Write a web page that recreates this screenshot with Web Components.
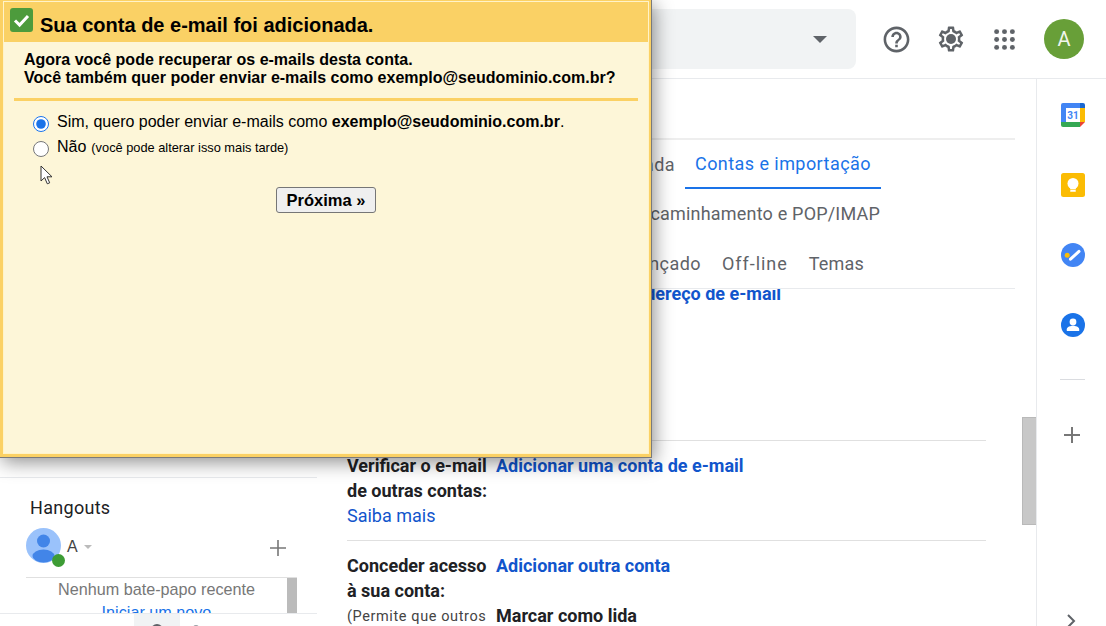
<!DOCTYPE html>
<html lang="pt-BR">
<head>
<meta charset="utf-8">
<title>Gmail</title>
<style>
  html, body { margin: 0; height: 100%; overflow: hidden; background: #fff; }
</style>
</head>
<body>
<gm-app></gm-app>
<script>
const GEAR = 'M19.43 12.98c.04-.32.07-.64.07-.98 0-.34-.03-.66-.07-.98l2.11-1.65c.19-.15.24-.42.12-.64l-2-3.46c-.09-.16-.26-.25-.44-.25-.06 0-.12.01-.17.03l-2.49 1c-.52-.4-1.08-.73-1.69-.98l-.38-2.65C14.46 2.18 14.25 2 14 2h-4c-.25 0-.46.18-.49.42l-.38 2.65c-.61.25-1.17.59-1.69.98l-2.49-1c-.06-.02-.12-.03-.18-.03-.17 0-.34.09-.43.25l-2 3.46c-.13.22-.07.49.12.64l2.11 1.65c-.04.32-.07.65-.07.98 0 .33.03.66.07.98l-2.11 1.65c-.19.15-.24.42-.12.64l2 3.46c.09.16.26.25.44.25.06 0 .12-.01.17-.03l2.49-1c.52.4 1.08.73 1.69.98l.38 2.65c.03.24.24.42.49.42h4c.25 0 .46-.18.49-.42l.38-2.65c.61-.25 1.17-.59 1.69-.98l2.49 1c.06.02.12.03.18.03.17 0 .34-.09.43-.25l2-3.46c.12-.22.07-.49-.12-.64l-2.11-1.65zm-1.98-1.71c.04.31.05.52.05.73 0 .21-.02.43-.05.73l-.14 1.13.89.7 1.08.84-.7 1.21-1.27-.51-1.04-.42-.9.68c-.43.32-.84.56-1.25.73l-1.06.43-.16 1.13-.2 1.35h-1.4l-.19-1.35-.16-1.13-1.06-.43c-.43-.18-.83-.41-1.23-.71l-.91-.7-1.06.43-1.27.51-.7-1.21 1.08-.84.89-.7-.14-1.13c-.03-.31-.05-.54-.05-.74s.02-.43.05-.73l.14-1.13-.89-.7-1.08-.84.7-1.21 1.27.51 1.04.42.9-.68c.43-.32.84-.56 1.25-.73l1.06-.43.16-1.13.2-1.35h1.39l.19 1.35.16 1.13 1.06.43c.43.18.83.41 1.23.71l.91.7 1.06-.43 1.27-.51.7 1.21-1.07.85-.89.7.14 1.13z';
const HELP = 'M11 18h2v-2h-2v2zm1-16C6.48 2 2 6.48 2 12s4.48 10 10 10 10-4.48 10-10S17.52 2 12 2zm0 18c-4.41 0-8-3.59-8-8s3.59-8 8-8 8 3.59 8 8-3.59 8-8 8zm0-14c-2.21 0-4 1.79-4 4h2c0-1.1.9-2 2-2s2 .9 2 2c0 2-3 1.75-3 5h2c0-2.25 3-2.5 3-5 0-2.21-1.79-4-4-4z';

class GmApp extends HTMLElement {
    constructor() {
        super();
        this.attachShadow({ mode: 'open' });
    }

    connectedCallback() {
        this.shadowRoot.innerHTML = `
    <style>
      :host {
        display: flex;
        flex-direction: column;
        position: relative;
        width: 1106px;
        height: 626px;
        overflow: hidden;
        font-family: Roboto, "Liberation Sans", sans-serif;
      }
      .body {
        display: flex;
        flex: 1;
        min-height: 0;
      }
    </style>
    <gm-header></gm-header>
    <div class="body">
      <gm-sidebar></gm-sidebar>
      <gm-settings></gm-settings>
      <gm-rail></gm-rail>
    </div>
    <gm-dialog></gm-dialog>
  `;
    }
}

class GmHeader extends HTMLElement {
    constructor() {
        super();
        this.attachShadow({ mode: 'open' });
    }

    connectedCallback() {
        const dots = [5, 12, 19].map(y => [5, 12, 19].map(x => `<circle cx="${x}" cy="${y}" r="2.2"/>`).join('')).join('');
        this.shadowRoot.innerHTML = `
    <style>
      :host {
        display: flex;
        align-items: center;
        flex: none;
        height: 78px;
        padding-left: 240px;
        box-sizing: content-box;
        border-bottom: 1px solid #e8eaed;
      }
      .search {
        display: flex;
        align-items: center;
        justify-content: flex-end;
        width: 616px;
        height: 60px;
        background: #f1f3f4;
        border-radius: 0 8px 8px 0;
      }
      .caret {
        width: 0;
        height: 0;
        margin-right: 29px;
        border: 7px solid transparent;
        border-top-color: #5f6368;
        border-bottom: 0;
      }
      .icon {
        display: flex;
        align-items: center;
        justify-content: center;
        width: 40px;
        height: 40px;
        fill: #5f6368;
      }
      .help { margin-left: 20px; }
      .gear { margin-left: 15px; }
      .apps { margin-left: 13px; }
      .avatar {
        display: flex;
        align-items: center;
        justify-content: center;
        width: 40px;
        height: 40px;
        margin-left: 20px;
        border-radius: 50%;
        background: #689f38;
        color: #f1f5ec;
        font-size: 20px;
      }
    </style>
    <div class="search"><div class="caret"></div></div>
    <div class="icon help"><svg width="31" height="31" viewBox="0 0 24 24"><path d="${HELP}"/></svg></div>
    <div class="icon gear"><svg width="30" height="30" viewBox="0 0 24 24"><path d="${GEAR}"/><circle cx="12" cy="12" r="4"/></svg></div>
    <div class="icon apps"><svg width="27" height="27" viewBox="0 0 24 24">${dots}</svg></div>
    <div class="avatar">A</div>
  `;
    }
}

class GmSidebar extends HTMLElement {
    constructor() {
        super();
        this.attachShadow({ mode: 'open' });
    }

    connectedCallback() {
        this.shadowRoot.innerHTML = `
    <style>
      :host {
        display: flex;
        flex-direction: column;
        flex: none;
        width: 318px;
      }
      .spacer { flex: 1; }
      .footer {
        display: flex;
        flex: none;
        height: 12px;
        padding-left: 134px;
        border-top: 1px solid #e8eaed;
        margin-right: 1px;
        overflow: hidden;
      }
      .tab {
        display: flex;
        justify-content: center;
        width: 46px;
        background: #f1f3f4;
      }
      .tab i, .next i {
        display: block;
        width: 12px;
        height: 12px;
        margin-top: 10px;
        border-radius: 50%;
        background: #5f6368;
      }
      .next i { width: 6px; margin: 11px 0 0 13px; border-radius: 3px; background: #9aa0a6; }
    </style>
    <div class="spacer"></div>
    <gm-hangouts></gm-hangouts>
    <div class="footer"><div class="tab"><i></i></div><div class="next"><i></i></div></div>
  `;
    }
}

class GmHangouts extends HTMLElement {
    constructor() {
        super();
        this.attachShadow({ mode: 'open' });
    }

    connectedCallback() {
        this.shadowRoot.innerHTML = `
    <style>
      :host {
        display: flex;
        flex-direction: column;
        flex: none;
        height: 136px;
        margin-right: 1px;
        box-sizing: border-box;
        border-top: 1px solid #e8eaed;
        overflow: hidden;
      }
      h2 {
        margin: 20px 0 0 30px;
        font: 400 18px/20px Roboto, "Liberation Sans", sans-serif;
        letter-spacing: .3px;
        color: #202124;
      }
      .me {
        display: flex;
        align-items: center;
        height: 36px;
        margin: 9px 0 0 26px;
      }
      .photo {
        position: relative;
        flex: none;
        width: 35px;
        height: 35px;
      }
      .dot {
        position: absolute;
        right: -4px;
        bottom: -4px;
        width: 13px;
        height: 13px;
        border-radius: 50%;
        background: #3d9c35;
      }
      .name {
        margin: 3px 0 0 6px;
        font: 16px "Liberation Sans", sans-serif;
        color: #444;
      }
      .arrow {
        width: 0;
        height: 0;
        margin: 3px 0 0 6px;
        border: 4.5px solid transparent;
        border-top-color: #bbb;
        border-bottom: 0;
      }
      .add { margin: 6px 0 0 auto; margin-right: 31px; display: flex; }
      .list {
        display: flex;
        flex: 1;
        margin: 14px 20px 0 26px;
        border-top: 1px solid #e0e0e0;
        min-height: 0;
      }
      .chats {
        flex: 1;
        text-align: center;
        font: 16.2px/23px "Liberation Sans", sans-serif;
        color: #777;
      }
      .chats a { display: block; color: #1a73e8; }
      .bar { flex: none; width: 10px; background: #bbb; }
    </style>
    <h2>Hangouts</h2>
    <div class="me">
      <div class="photo">
        <svg width="35" height="35" viewBox="0 0 35 35">
          <circle cx="17.5" cy="17.5" r="17.5" fill="#9ac2fb"/>
          <circle cx="17.5" cy="13" r="6.5" fill="#4285e8"/>
          <ellipse cx="17.5" cy="28" rx="11" ry="6.5" fill="#4285e8"/>
        </svg>
        <div class="dot"></div>
      </div>
      <span class="name">A</span>
      <div class="arrow"></div>
      <svg class="add" width="16" height="16" viewBox="0 0 16 16"><path d="M7.2 0h1.6v7.2H16v1.6H8.8V16H7.2V8.8H0V7.2h7.2z" fill="#777"/></svg>
    </div>
    <div class="list">
      <div class="chats">Nenhum bate-papo recente<a>Iniciar um novo</a></div>
      <div class="bar"></div>
    </div>
  `;
    }
}

class GmSettings extends HTMLElement {
    constructor() {
        super();
        this.attachShadow({ mode: 'open' });
    }

    connectedCallback() {
        this.shadowRoot.innerHTML = `
    <style>
      :host {
        display: flex;
        flex: 1;
        min-width: 0;
      }
      .main {
        display: flex;
        flex-direction: column;
        flex: 1;
        min-width: 0;
        padding-right: 7px;
      }
      .tabs {
        flex: none;
        margin-top: 59px;
        border-top: 2px solid #eeeeee;
        border-bottom: 1px solid #e8eaed;
        font-size: 18px;
        letter-spacing: .44px;
        color: #5f6368;
      }
      .tab-row {
        display: flex;
        align-items: center;
      }
      .r1 { height: 49px; }
      .r2 { height: 50px; letter-spacing: .19px; }
      .r2 .tail { margin-bottom: 2px; }
      .r3 { height: 49px; }
      .tail { text-align: right; white-space: nowrap; }
      .r1 .tail { width: 357px; }
      .r2 .tail { width: 562px; }
      .r3 .tail { width: 383px; }
      .active {
        display: flex;
        align-items: center;
        align-self: stretch;
        margin-left: 10px;
        padding: 0 10px;
        color: #1a73e8;
        border-bottom: 2px solid #1a73e8;
        box-sizing: border-box;
      }
      .r3 span + span { margin-left: 21px; }
      .r3 .wide { letter-spacing: .95px; }
      .r3 .tight { letter-spacing: .2px; }
      .panel {
        flex: 1;
        min-height: 0;
        overflow: hidden;
      }
      .rows {
        width: 639px;
        margin: -20px 0 0 29px;
      }
      .track {
        display: flex;
        flex: none;
        width: 14px;
      }
      .thumb {
        width: 14px;
        height: 108px;
        margin-top: 338px;
        box-sizing: border-box;
        background: #c8c8c8;
        border: 1px solid #b9b9b9;
        border-right: 0;
      }
    </style>
    <div class="main">
      <div class="tabs">
        <div class="tab-row r1"><span class="tail">Caixa de entrada</span><span class="active">Contas e importação</span></div>
        <div class="tab-row r2"><span class="tail">Encaminhamento e POP/IMAP</span></div>
        <div class="tab-row r3"><span class="tail">Avançado</span><span class="wide">Off-line</span><span class="tight">Temas</span></div>
      </div>
      <div class="panel">
        <div class="rows">
          <gm-setting-row height="172"><a>Adicionar outro endereço de e-mail</a></gm-setting-row>
          <gm-setting-row height="100" label="Verificar o e-mail de outras contas:" help="Saiba mais"><a>Adicionar uma conta de e-mail</a></gm-setting-row>
          <gm-setting-row height="100" label="Conceder acesso à sua conta:" note="(Permite que outros"><a>Adicionar outra conta</a><b>Marcar como lida</b></gm-setting-row>
        </div>
      </div>
    </div>
    <div class="track"><div class="thumb"></div></div>
  `;
    }
}

class GmSettingRow extends HTMLElement {
    constructor() {
        super();
        this.attachShadow({ mode: 'open' });
    }

    connectedCallback() {
        const label = this.getAttribute('label') || '';
        const help = this.getAttribute('help');
        const note = this.getAttribute('note');
        this.shadowRoot.innerHTML = `
    <style>
      :host {
        display: grid;
        grid-template-columns: 149px 1fr;
        height: ${this.getAttribute('height')}px;
        box-sizing: border-box;
        padding-top: 12px;
        border-bottom: 1px solid #e0e0e0;
        font-size: 18px;
        line-height: 25px;
        color: #202124;
      }
      .label { font-weight: 700; }
      .help { display: block; font-weight: 400; color: #15c; }
      .note { display: block; font-weight: 400; font-size: 14.5px; letter-spacing: .6px; line-height: 27px; color: #444; white-space: nowrap; }
      ::slotted(a) { display: block; font-weight: 700; color: #15c; }
      ::slotted(b) { display: block; margin-top: 25px; font-weight: 700; color: #202124; }
    </style>
    <div class="label">${label}${help ? `<span class="help">${help}</span>` : ''}${note ? `<span class="note">${note}</span>` : ''}</div>
    <div class="value"><slot></slot></div>
  `;
    }
}

class GmRail extends HTMLElement {
    constructor() {
        super();
        this.attachShadow({ mode: 'open' });
    }

    connectedCallback() {
        this.shadowRoot.innerHTML = `
    <style>
      :host {
        display: flex;
        flex-direction: column;
        align-items: center;
        flex: none;
        width: 70px;
        padding: 24px 0 0 2px;
        box-sizing: border-box;
        border-left: 1px solid #e8eaed;
        overflow: hidden;
      }
      svg { display: block; flex: none; }
      .app { margin-bottom: 46px; }
      .rule {
        flex: none;
        width: 25px;
        height: 1px;
        margin-top: -4px;
        background: #dadce0;
      }
      .add { margin-top: 47px; margin-left: -1px; }
      .more { margin-top: auto; margin-bottom: -2px; margin-left: -4px; }
      text { font: 700 10px Roboto, sans-serif; }
    </style>
    <svg class="app" width="24" height="24" viewBox="0 0 24 24">
      <rect x="0.5" y="0.5" width="23" height="23" rx="1.5" fill="#fff"/>
      <path d="M2 0h17v5H5v14H0V2a2 2 0 0 1 2-2z" fill="#4285f4"/>
      <path d="M19 0h3a2 2 0 0 1 2 2v3h-5z" fill="#1967d2"/>
      <rect x="19" y="5" width="5" height="14" fill="#fbbc04"/>
      <path d="M0 19h19v5H2a2 2 0 0 1-2-2z" fill="#34a853"/>
      <path d="M19 19h5l-5 5z" fill="#ea4335"/>
      <text x="12" y="16" text-anchor="middle" fill="#4285f4">31</text>
    </svg>
    <svg class="app" width="24" height="24" viewBox="0 0 24 24">
      <rect width="24" height="24" rx="2.5" fill="#fbbc04"/>
      <circle cx="12" cy="10.5" r="5.5" fill="#fff"/>
      <rect x="9.2" y="14" width="5.6" height="2.4" fill="#fff"/>
      <rect x="9.2" y="17" width="5.6" height="1.8" rx=".6" fill="#fff"/>
    </svg>
    <svg class="app" width="24" height="24" viewBox="0 0 24 24">
      <circle cx="12" cy="12" r="12" fill="#4285f4"/>
      <path d="M9.5 16.2 18 8.4" stroke="#fff" stroke-width="3" stroke-linecap="round"/>
      <circle cx="6.2" cy="12.2" r="2.5" fill="#fbbc04"/>
    </svg>
    <svg class="app" width="24" height="24" viewBox="0 0 24 24">
      <circle cx="12" cy="12" r="12" fill="#1a73e8"/>
      <circle cx="12" cy="9" r="3.4" fill="#fff"/>
      <path d="M5.8 16.2c0-2.3 4-3.4 6.2-3.4s6.2 1.1 6.2 3.4V18H5.8z" fill="#fff"/>
    </svg>
    <div class="rule"></div>
    <svg class="add" width="16" height="16" viewBox="0 0 16 16"><path d="M7 0h2v7h7v2H9v7H7V9H0V7h7z" fill="#777"/></svg>
    <svg class="more" width="10" height="14" viewBox="0 0 10 14"><path d="M2 1l6 6-6 6" fill="none" stroke="#5f6368" stroke-width="2"/></svg>
  `;
    }
}

class GmDialog extends HTMLElement {
    constructor() {
        super();
        this.attachShadow({ mode: 'open' });
    }

    connectedCallback() {
        this.shadowRoot.innerHTML = `
    <style>
      :host {
        position: absolute;
        left: 0;
        top: 0;
        display: flex;
        width: 652px;
        height: 458px;
        box-sizing: border-box;
        border-right: 1px solid #7a7a7a;
        border-bottom: 1px solid #7a7a7a;
        background: #fbd164;
        box-shadow: 2px 4px 18px rgba(0, 0, 0, .45);
        font-family: "Liberation Sans", Arial, sans-serif;
        color: #000;
      }
      .frame {
        display: flex;
        flex-direction: column;
        flex: 1;
        margin: 1px 2px 3px 3px;
        border: 1px solid #fff3c8;
        background: #fdf6d8;
      }
      header {
        display: flex;
        align-items: center;
        flex: none;
        height: 40px;
        padding-left: 6px;
        background: #fad165;
      }
      header svg { flex: none; margin-top: -4px; }
      h1 {
        margin: 6px 0 0 7px;
        font-size: 20px;
        font-weight: 700;
      }
      .intro {
        margin: 9px 0 0 20px;
        font-size: 16px;
        font-weight: 700;
        line-height: 18px;
      }
      hr {
        flex: none;
        height: 3px;
        width: 624px;
        margin: 11px 0 0 10px;
        border: 0;
        background: #fbd164;
      }
      .options {
        display: flex;
        flex-direction: column;
        margin: 9px 0 0 28px;
        font-size: 16px;
      }
      label {
        display: flex;
        align-items: center;
        height: 25px;
        white-space: pre;
      }
      label span { margin-bottom: 2px; }
      input {
        flex: none;
        width: 16px;
        height: 16px;
        margin: 3px 8px 0 1px;
        accent-color: #1a73e8;
      }
      small { font-size: 12.8px; margin-left: 5px; }
      .pointer { flex: none; width: 13px; height: 20px; margin: 5px 0 0 36px; }
      .actions {
        display: flex;
        justify-content: center;
        margin-top: 2px;
      }
      button {
        width: 100px;
        height: 26px;
        padding: 0;
        font: 700 16.5px "Liberation Sans", Arial, sans-serif;
        color: #000;
        background: #efefef;
        border: 1px solid #767676;
        border-radius: 3px;
      }
    </style>
    <div class="frame">
      <header>
        <svg width="23" height="24" viewBox="0 0 23 24">
          <rect width="23" height="24" rx="3" fill="#4d9b3c"/>
          <path d="M5 12.5l4.6 4.6L18 8" fill="none" stroke="#fff" stroke-width="3"/>
        </svg>
        <h1>Sua conta de e-mail foi adicionada.</h1>
      </header>
      <div class="intro">Agora você pode recuperar os e-mails desta conta.<br>Você também quer poder enviar e-mails como exemplo@seudominio.com.br?</div>
      <hr>
      <div class="options">
        <label><input type="radio" name="send" checked><span>Sim, quero poder enviar e-mails como <b>exemplo@seudominio.com.br</b>.</span></label>
        <label><input type="radio" name="send"><span>Não<small>(você pode alterar isso mais tarde)</small></span></label>
      </div>
      <svg class="pointer" viewBox="0 0 13 20"><path d="M1 1v15l3.6-3.4 2.7 6.2 2.4-1-2.7-6h5z" fill="#fff" stroke="#333" stroke-width="1"/></svg>
      <div class="actions"><button>Próxima »</button></div>
    </div>
  `;
    }
}

customElements.define('gm-app', GmApp);
customElements.define('gm-header', GmHeader);
customElements.define('gm-sidebar', GmSidebar);
customElements.define('gm-hangouts', GmHangouts);
customElements.define('gm-settings', GmSettings);
customElements.define('gm-setting-row', GmSettingRow);
customElements.define('gm-rail', GmRail);
customElements.define('gm-dialog', GmDialog);
</script>
</body>
</html>
